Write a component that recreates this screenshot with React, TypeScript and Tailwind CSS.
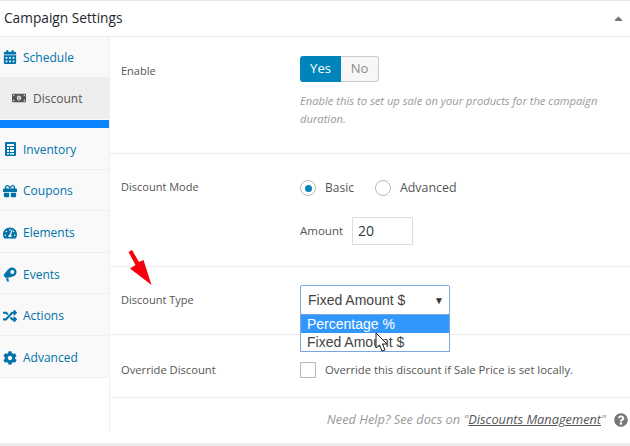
import { FaCalendarAlt, FaCaretUp, FaCog, FaGift, FaMoneyBillAlt, FaQuestionCircle, FaRandom, FaTachometerAlt } from "react-icons/fa";

const InventoryIcon = () => (
  <svg width="11" height="14" viewBox="0 0 11 14" className="-mt-[2px] text-[#0073aa]">
    <path fill="currentColor" fillRule="evenodd" d="M1 0h9a1 1 0 0 1 1 1v12a1 1 0 0 1-1 1H1a1 1 0 0 1-1-1V1a1 1 0 0 1 1-1zM2 2v2h7V2zM2 5v2h2V5zM5 5v2h4V5zM2 8v2h2V8zM5 8v2h4V8zM2 11v1.5h2V11zM5 11v1.5h4V11z" />
  </svg>
);

const MegaphoneIcon = () => (
  <svg width="14" height="15" viewBox="0 0 14 15" className="text-[#0073aa]">
    <path fill="currentColor" d="M9 0.5 A4.5 4.5 0 1 1 9 9.5 A4.5 4.5 0 1 1 9 0.5 Z M0.5 8 L5 2.5 L9 10 L2.5 11 Z M3 11.5 L5.2 11 L6 14.5 L4 14.5 Z" />
    <circle cx="9.3" cy="5" r="2" fill="#f9f9f9" />
  </svg>
);

const tabs = [
  { name: "Inventory", icon: <InventoryIcon /> },
  { name: "Coupons", icon: <FaGift className="text-[14px] text-[#0073aa]" /> },
  { name: "Elements", icon: <FaTachometerAlt className="text-[14px] text-[#0073aa]" /> },
  { name: "Events", icon: <MegaphoneIcon /> },
  { name: "Actions", icon: <FaRandom className="text-[14px] text-[#0073aa]" /> },
  { name: "Advanced", icon: <FaCog className="text-[14px] text-[#0073aa]" /> },
];

const App = () => {
  return (
    <div className="h-[446px] w-[630px] overflow-hidden bg-white font-['Open_Sans',sans-serif] text-[12px] text-[#555]">
      <div className="border-t border-[#e5e5e5]">
        <div className="flex h-[36px] items-center justify-between border-b border-[#eee] pl-1 pr-[5px]">
          <h2 className="text-[13.7px] font-medium text-[#23282d]">Campaign Settings</h2>
          <FaCaretUp className="text-[13px] text-[#72777c]" />
        </div>

        <div className="flex h-[395px]">
          {/* left tabs */}
          <div className="w-[110px] shrink-0 border-r border-[#eee]">
            <div className="bg-[#f9f9f9]">
              <div className="flex h-[40px] items-center gap-[6px] pt-[2px] pl-[3px] text-[#0073aa]">
                <FaCalendarAlt className="-mt-[2px] w-[14px] text-[14px]" />
                <span>Schedule</span>
              </div>
              <div className="flex h-[42px] items-center gap-[7px] bg-[#eee] pt-[2px] pl-[12px] text-[#555]">
                <FaMoneyBillAlt className="-mt-[2px] text-[14px]" />
                <span>Discount</span>
              </div>
              <div className="mt-px h-[8px] bg-[#0a84ff]" />
              {tabs.map((t) => (
                <div key={t.name} className="flex h-[41.6px] items-center gap-[6px] border-b border-[#eee] pt-[3px] pl-[3px] text-[#0073aa]">
                  <span className="flex w-[14px] justify-center">{t.icon}</span>
                  <span>{t.name}</span>
                </div>
              ))}
            </div>
          </div>

          {/* settings rows */}
          <div className="relative flex-1">
            <div className="flex h-[117px] border-b border-[#eee] pl-[11px] pt-[19px]">
              <div className="w-[179px] pt-[7px] text-[11px]">Enable</div>
              <div>
                <div className="flex h-[26px] w-[79px] text-[13px]">
                  <div className="flex w-[41px] items-center justify-center rounded-l-[3px] bg-[#0085ba] text-white">Yes</div>
                  <div className="flex flex-1 items-center justify-center rounded-r-[3px] border border-l-0 border-[#ccc] bg-[#f7f7f7] text-[#8a8a8a]">No</div>
                </div>
                <p className="mt-[10px] w-[310px] text-[11.2px] leading-[18px] text-[#999] italic">Enable this to set up sale on your products for the campaign duration.</p>
              </div>
            </div>

            <div className="flex h-[113px] border-b border-[#eee] pl-[11px] pt-[25px]">
              <div className="w-[179px] text-[11px]">Discount Mode</div>
              <div>
                <div className="flex items-center text-[12px]">
                  <span className="flex h-[16px] w-[16px] items-center justify-center rounded-full border border-[#b4b9be] bg-white">
                    <span className="h-[7px] w-[7px] rounded-full bg-[#0085ba]" />
                  </span>
                  <span className="ml-[9px]">Basic</span>
                  <span className="ml-[21px] h-[16px] w-[16px] rounded-full border border-[#b4b9be] bg-white" />
                  <span className="ml-[9px] text-[12.4px]">Advanced</span>
                </div>
                <div className="mt-[19px] flex items-center text-[11.5px]">
                  <span>Amount</span>
                  <div className="ml-[9px] flex h-[28px] w-[61px] items-center border border-[#ddd] pl-[5px] text-[14px] text-[#32373c]">20</div>
                </div>
              </div>
            </div>

            <div className="flex h-[68px] border-b border-[#eee] pl-[11px] pt-[25px]">
              <div className="w-[179px] text-[11px]">Discount Type</div>
              <div className="relative">
                <div className="-mt-[7px] flex h-[30px] w-[150px] items-center justify-between rounded-[2px] border border-[#7aa7e0] bg-white pl-[7px] pr-[5px] font-['Liberation_Sans',sans-serif] text-[14px] text-[#444]">
                  <span>Fixed Amount $</span>
                  <span className="text-[10px] text-[#333]">▼</span>
                </div>
                <div className="absolute top-[22px] left-0 z-10 w-[150px] border border-[#7aa7e0] bg-white font-['Liberation_Sans',sans-serif] text-[14px] leading-[18px] text-[#444]">
                  <div className="bg-[#3297fd] pl-[6px] text-white">Percentage %</div>
                  <div className="pl-[6px]">Fixed Amount $</div>
                </div>
              </div>
            </div>

            <div className="flex h-[63px] border-b border-[#eee] pl-[11px] pt-[27px]">
              <div className="w-[179px] text-[11.2px]">Override Discount</div>
              <div className="flex items-start">
                <span className="h-[16px] w-[16px] border border-[#b4b9be] bg-white" />
                <span className="ml-[9px] text-[11.3px]">Override this discount if Sale Price is set locally.</span>
              </div>
            </div>

            <div className="flex h-[34px] items-center justify-end pt-[10px] pr-[2px] text-[12.8px] text-[#999] italic">
              <span>Need Help? See docs on "<span className="text-[#555] underline">Discounts Management</span>"</span>
              <FaQuestionCircle className="ml-[8px] text-[14px] text-[#777] not-italic" />
            </div>

            {/* annotation arrow */}
            <svg className="absolute top-[213px] left-[18px] z-20" width="26" height="38" viewBox="0 0 26 38">
              <path d="M0.5 2 L4 0 L11 12 L15.5 10 L23.5 35 L2 18.5 L7.5 15 Z" fill="#f5000d" />
            </svg>

            {/* mouse cursor */}
            <svg className="absolute top-[295px] left-[265px] z-30" width="14" height="21" viewBox="0 0 14 21">
              <path d="M1 1 L1 16 L4.5 13 L7 19 L10 18 L7.5 12 L12 12 Z" fill="#fff" stroke="#222" strokeWidth="1" strokeLinejoin="round" />
            </svg>
          </div>
        </div>
        <div className="mt-[11px] h-[3px] bg-[#eee]" />
      </div>
    </div>
  );
};

export default App;
